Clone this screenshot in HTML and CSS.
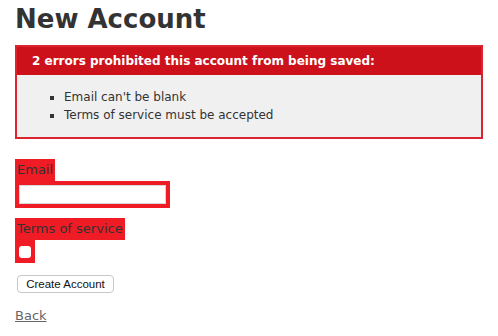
FILE: index.html
```html
<!DOCTYPE html>
<html>
<head>
<meta charset="utf-8">
<title>New Account</title>
<link rel="stylesheet" href="styles.css">
</head>
<body>
<h1 class="title">New Account</h1>
<form class="account-form">
  <div class="error-explanation">
    <h2 class="error-title">2 errors prohibited this account from being saved:</h2>
    <ul class="error-list">
      <li>Email can't be blank</li>
      <li>Terms of service must be accepted</li>
    </ul>
  </div>
  <div class="field">
    <div class="field-with-errors"><label class="field-label" for="email">Email</label></div>
    <div class="field-with-errors"><input class="text-input" type="text" id="email"></div>
  </div>
  <div class="field">
    <div class="field-with-errors"><label class="field-label" for="tos">Terms of service</label></div>
    <div class="field-with-errors"><input class="check-input" type="checkbox" id="tos"></div>
  </div>
  <div class="actions">
    <button class="submit-btn" type="button">Create Account</button>
  </div>
</form>
<div class="back-row"><a class="back-link" href="#">Back</a></div>
</body>
</html>
```
FILE: styles.css
```css
html, body {
  background: #fff;
}
body {
  margin: 0 15px;
  color: #333;
  font-family: "DejaVu Sans", Verdana, sans-serif;
  font-size: 13px;
  line-height: 18px;
}
.title {
  margin: 10px 0 17px;
  font-size: 26px;
  line-height: 18px;
  font-weight: bold;
  color: #333;
}
.account-form {
  margin: 0;
}
.error-explanation {
  width: 450px;
  border: 2px solid #dc2430;
  padding: 7px 7px 0;
  margin-bottom: 20px;
  background: #f0f0f0;
}
.error-title {
  margin: -7px -7px 0;
  padding: 5px 5px 5px 15px;
  font-size: 12px;
  line-height: 18px;
  font-weight: bold;
  background: #cc111b;
  color: #fff;
}
.error-list {
  margin: 13px 0;
  padding-left: 40px;
  font-size: 13px;
}
.error-list li {
  font-size: 12px;
  line-height: 18px;
  list-style: square;
}
.field {
  margin-bottom: 10px;
}
.field-with-errors {
  display: table;
  padding: 2px;
  background: #ef1c25;
}
.field-label {
  display: block;
}
.text-input {
  display: block;
  box-sizing: border-box;
  width: 151px;
  height: 23px;
  margin: 0;
  border: 2px solid #ef1c25;
  box-shadow: inset 0 0 0 1px #d8d8d8;
  background: #fff;
  padding: 1px 3px;
  font: 13px "DejaVu Sans", sans-serif;
}
.check-input {
  display: block;
  -webkit-appearance: none;
  appearance: none;
  width: 12px;
  height: 12px;
  margin: 4px 2px 3px 2px;
  border: 0;
  border-radius: 3px;
  background: #fff;
}
.actions {
  display: flex;
  margin-bottom: 12px;
}
.submit-btn {
  margin: 2px;
  box-sizing: border-box;
  width: 97px;
  height: 18px;
  padding: 0;
  border: 1px solid #c6c6c6;
  border-radius: 4px;
  background: #fff;
  color: #111;
  font-family: "Liberation Sans", Arial, sans-serif;
  font-size: 11.5px;
  line-height: 16px;
}
.back-row {
  margin: 0;
}
.back-link {
  color: #666;
  text-decoration: underline;
}
```
